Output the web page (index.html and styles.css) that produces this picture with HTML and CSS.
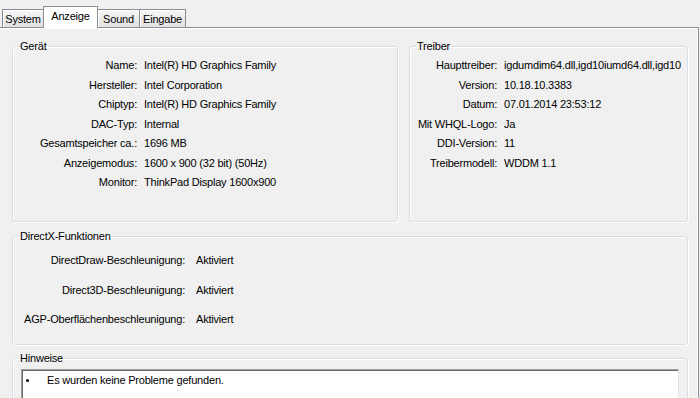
FILE: index.html
```html
<!DOCTYPE html>
<html lang="de">
<head>
<meta charset="utf-8">
<title>DirectX-Diagnoseprogramm – Anzeige</title>
<link rel="stylesheet" href="styles.css">
</head>
<body>
<div class="tabs">
  <div class="tab tab-system">System</div>
  <div class="tab tab-anzeige sel">Anzeige</div>
  <div class="tab tab-sound">Sound</div>
  <div class="tab tab-eingabe">Eingabe</div>
</div>
<div class="panel">
  <div class="top">
    <fieldset class="grp dev">
      <legend>Gerät</legend>
      <div class="kv">
        <span class="k">Name:</span><span class="v">Intel(R) HD Graphics Family</span>
        <span class="k">Hersteller:</span><span class="v">Intel Corporation</span>
        <span class="k">Chiptyp:</span><span class="v">Intel(R) HD Graphics Family</span>
        <span class="k">DAC-Typ:</span><span class="v">Internal</span>
        <span class="k">Gesamtspeicher ca.:</span><span class="v">1696 MB</span>
        <span class="k">Anzeigemodus:</span><span class="v">1600 x 900 (32 bit) (50Hz)</span>
        <span class="k">Monitor:</span><span class="v">ThinkPad Display 1600x900</span>
      </div>
    </fieldset>
    <fieldset class="grp drv">
      <legend>Treiber</legend>
      <div class="kv">
        <span class="k">Haupttreiber:</span><span class="v">igdumdim64.dll,igd10iumd64.dll,igd10</span>
        <span class="k">Version:</span><span class="v">10.18.10.3383</span>
        <span class="k">Datum:</span><span class="v">07.01.2014 23:53:12</span>
        <span class="k">Mit WHQL-Logo:</span><span class="v">Ja</span>
        <span class="k">DDI-Version:</span><span class="v">11</span>
        <span class="k">Treibermodell:</span><span class="v">WDDM 1.1</span>
      </div>
    </fieldset>
  </div>
  <fieldset class="grp dx">
    <legend>DirectX-Funktionen</legend>
    <div class="kv">
      <span class="k">DirectDraw-Beschleunigung:</span><span class="v">Aktiviert</span>
      <span class="k">Direct3D-Beschleunigung:</span><span class="v">Aktiviert</span>
      <span class="k">AGP-Oberflächenbeschleunigung:</span><span class="v">Aktiviert</span>
    </div>
  </fieldset>
  <fieldset class="grp notes">
    <legend>Hinweise</legend>
    <div class="textbox">
      <div class="note"><span class="dot"></span><span>Es wurden keine Probleme gefunden.</span></div>
    </div>
  </fieldset>
</div>
</body>
</html>
```

FILE: styles.css
```css
html, body {
  margin: 0;
  padding: 0;
}
body {
  background: #f0f0f0;
  font-family: "Liberation Sans", Arial, sans-serif;
  font-size: 11px;
  line-height: 13px;
  letter-spacing: -0.2px;
  color: #000;
  height: 398px;
  overflow: hidden;
}

/* Tabs */
.tabs {
  display: flex;
  align-items: flex-end;
  height: 27px;
  padding-left: 2px;
}
.tab {
  box-sizing: border-box;
  height: 18px;
  padding-top: 3px;
  text-align: center;
  border: 1px solid #898c95;
  border-bottom: 0;
  background: linear-gradient(#f5f5f5, #e2e2e2);
  box-shadow: inset 1px 1px 0 #fff;
  margin-left: -1px;
  white-space: nowrap;
}
.tab-system { margin-left: 0; width: 42px; }
.tab-anzeige { width: 55px; }
.tab-sound { width: 43px; }
.tab-eingabe { width: 47px; }
.tab.sel {
  height: 22px;
  margin-bottom: -1px;
  background: #fff;
  box-shadow: none;
  z-index: 1;
}

/* Panel */
.panel {
  box-sizing: border-box;
  width: 699px;
  height: 371px;
  overflow: hidden;
  border-top: 1px solid #898c95;
  border-right: 1px solid #898c95;
  box-shadow: inset -1px 1px 0 #fff;
  padding: 12px 10px 0 12px;
}

.top {
  display: grid;
  grid-template-columns: 386px 279px;
  column-gap: 11px;
}

.grp {
  box-sizing: border-box;
  margin: 0;
  padding: 0;
  min-width: 0;
  border: 1px solid #d5dfe5;
  border-radius: 3px;
  box-shadow: inset 1px 1px 0 #fff, 1px 1px 0 #fff;
}
.grp legend {
  margin-left: 6px;
  padding: 0 1px;
  line-height: 13px;
}
.top .grp { height: 182px; }

.kv {
  display: grid;
  grid-template-columns: 124px 1fr;
  column-gap: 7px;
  line-height: 19.5px;
  padding-top: 3px;
}
.k {
  text-align: right;
  white-space: nowrap;
}
.v {
  white-space: nowrap;
  overflow: hidden;
}
.drv .kv { grid-template-columns: 87px 1fr; }

.dx {
  margin-top: 8px;
  height: 115px;
}
.dx .kv {
  grid-template-columns: 172px 1fr;
  column-gap: 11px;
  row-gap: 10px;
  padding-top: 8px;
}

.notes {
  margin-top: 7px;
  height: 60px;
}
.textbox {
  margin: 4px 8px 0;
  height: 40px;
  background: #fff;
  border-top: 1px solid #a0a0a0;
  border-left: 1px solid #a0a0a0;
  border-right: 1px solid #e3e3e3;
  box-shadow: inset 1px 1px 0 #696969;
  padding-top: 1px;
}
.note {
  display: flex;
  align-items: center;
  line-height: 18px;
  padding-left: 4px;
}
.dot {
  width: 3px;
  height: 3px;
  border-radius: 50%;
  background: #000;
  margin-right: 18px;
}
```
